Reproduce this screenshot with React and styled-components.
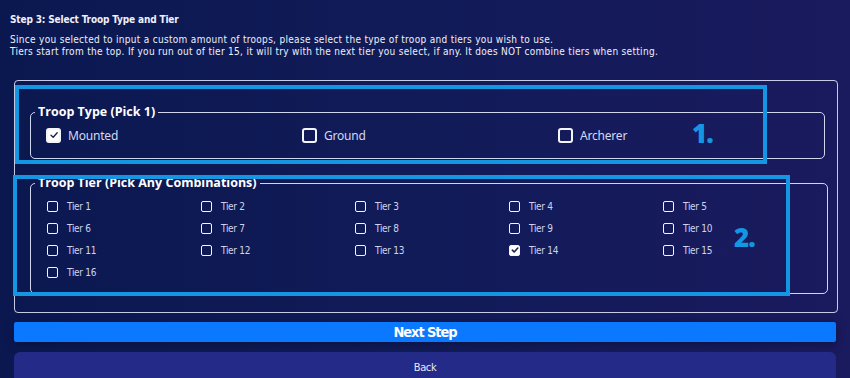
import React from "react";
import styled, { createGlobalStyle } from "styled-components";

const Global = createGlobalStyle`
  html, body { margin: 0; padding: 0; }
  body {
    width: 850px; height: 378px; overflow: hidden;
    background: linear-gradient(90deg, #0b1850 0%, #111b58 50%, #1a1a5e 100%);
    font-family: "DejaVu Sans Condensed", "DejaVu Sans", sans-serif;
    color: #eef0fa;
  }
`;

const Page = styled.div`
  position: relative;
  width: 850px;
  height: 378px;
  padding: 13px 13px 0 14px;
  box-sizing: border-box;
  display: flex;
  flex-direction: column;
`;

const Header = styled.div`
  margin-left: -4px;
`;

const Title = styled.div`
  font-weight: bold;
  font-size: 10px;
  letter-spacing: -0.15px;
  line-height: 13px;
  margin-bottom: 8px;
`;

const Desc = styled.div`
  font-size: 10px;
  letter-spacing: 0.3px;
  line-height: 11.5px;
`;

const Panel = styled.div`
  margin-top: 23px;
  border: 1px solid rgba(230, 235, 255, 0.85);
  border-radius: 4px;
  padding: 24px 14px 18px 15px;
  display: flex;
  flex-direction: column;
  gap: 17px;
  width: 824px;
  box-sizing: border-box;
`;

const Fieldset = styled.fieldset`
  margin: 0;
  border: 1px solid rgba(230, 235, 255, 0.9);
  border-radius: 5px;
  padding: ${(p) => p.$pad};
`;

const Legend = styled.legend`
  font-family: "Open Sans", sans-serif;
  font-weight: 700;
  font-size: 12.5px;
  padding: 0 3px;
  margin-left: ${(p) => p.$ml}px;
  line-height: 14px;
  color: #ffffff;
`;

const TypeRow = styled.div`
  display: grid;
  grid-template-columns: repeat(3, 256px);
`;

const Option = styled.label`
  display: flex;
  align-items: center;
  gap: ${(p) => (p.$big ? "7px" : "9px")};
  height: ${(p) => (p.$big ? "20px" : "22px")};
`;

const Box = styled.span`
  box-sizing: border-box;
  width: ${(p) => (p.$big ? "15px" : "11px")};
  height: ${(p) => (p.$big ? "15px" : "11px")};
  border: ${(p) => (p.$big ? "2px" : "1.5px")} solid #f4f5fb;
  border-radius: ${(p) => (p.$big ? "3px" : "2px")};
  background: ${(p) => (p.$checked ? "#ffffff" : "transparent")};
  display: flex;
  align-items: center;
  justify-content: center;
  flex: none;
`;

const TypeLabel = styled.span`
  font-family: "Noto Sans", sans-serif;
  font-size: 12px;
  letter-spacing: -0.2px;
  color: #d4d8f2;
`;

const TierGrid = styled.div`
  display: grid;
  grid-template-columns: repeat(5, 154px);
  padding-bottom: 10px;
`;

const TierLabel = styled.span`
  font-size: 10px;
  letter-spacing: -0.3px;
  color: #cfd3ee;
`;

const NextButton = styled.div`
  margin-top: 9px;
  width: 822px;
  height: 25px;
  background: #0a78ff;
  border-radius: 2px;
  display: flex;
  align-items: center;
  justify-content: center;
  font-weight: bold;
  font-size: 14.5px;
  letter-spacing: -1.1px;
  color: #ffffff;
  box-shadow: 0 2px 8px rgba(5, 10, 40, 0.5);
`;

const BackButton = styled.div`
  margin-top: 10px;
  width: 822px;
  height: 30px;
  background: #242a88;
  border-radius: 6px 6px 0 0;
  display: flex;
  align-items: flex-start;
  padding-top: 9px;
  box-sizing: border-box;
  justify-content: center;
  font-size: 11px;
  letter-spacing: -0.4px;
  color: #e6e8f6;
`;

const Highlight = styled.div`
  position: absolute;
  left: ${(p) => p.$x}px;
  top: ${(p) => p.$y}px;
  width: ${(p) => p.$w}px;
  height: ${(p) => p.$h}px;
  border: 4px solid #1596e2;
  box-sizing: border-box;
  pointer-events: none;
`;

const Marker = styled.div`
  position: absolute;
  left: ${(p) => p.$x}px;
  top: ${(p) => p.$y}px;
  font-family: "Open Sans", sans-serif;
  font-weight: 800;
  font-size: 26px;
  letter-spacing: -1px;
  color: #1596e2;
  line-height: 1;
`;

const Check = ({ big }) =>
  big ? (
    <svg width="10" height="10" viewBox="0 0 10 10">
      <path d="M2 5.2 L4.2 7.3 L8.2 2.8" fill="none" stroke="#1a1f4e" strokeWidth="1.3" strokeLinecap="round" strokeLinejoin="round" />
    </svg>
  ) : (
    <svg width="8" height="8" viewBox="0 0 8 8">
      <path d="M1.3 4.2 L3.2 6 L6.8 2" fill="none" stroke="#1a1f4e" strokeWidth="1.6" strokeLinecap="round" strokeLinejoin="round" />
    </svg>
  );

const types = [
  { label: "Mounted", checked: true },
  { label: "Ground", checked: false },
  { label: "Archerer", checked: false },
];

const tiers = Array.from({ length: 16 }, (_, i) => i + 1);

export default function App() {
  return (
    <>
      <Global />
      <Page>
        <Header>
          <Title>Step 3: Select Troop Type and Tier</Title>
          <Desc>
            Since you selected to input a custom amount of troops, please select the type of troop and tiers you wish to use.
            <br />
            Tiers start from the top. If you run out of tier 15, it will try with the next tier you select, if any. It does NOT combine tiers when setting.
          </Desc>
        </Header>
        <Panel>
          <Fieldset $pad="6px 10px 13px 15px">
            <Legend $ml={-11}>Troop Type (Pick 1)</Legend>
            <TypeRow>
              {types.map((t) => (
                <Option key={t.label} $big>
                  <Box $big $checked={t.checked}>{t.checked && <Check big />}</Box>
                  <TypeLabel>{t.label}</TypeLabel>
                </Option>
              ))}
            </TypeRow>
          </Fieldset>
          <Fieldset $pad="5px 10px 0 16px">
            <Legend $ml={-12}>Troop Tier (Pick Any Combinations)</Legend>
            <TierGrid>
              {tiers.map((n) => (
                <Option key={n}>
                  <Box $checked={n === 14}>{n === 14 && <Check />}</Box>
                  <TierLabel>Tier {n}</TierLabel>
                </Option>
              ))}
            </TierGrid>
          </Fieldset>
        </Panel>
        <NextButton>Next Step</NextButton>
        <BackButton>Back</BackButton>
        <Highlight $x={15} $y={85} $w={752} $h={79} />
        <Highlight $x={13} $y={175} $w={777} $h={121} />
        <Marker $x={692} $y={120}>1.</Marker>
        <Marker $x={734} $y={224}>2.</Marker>
      </Page>
    </>
  );
}
